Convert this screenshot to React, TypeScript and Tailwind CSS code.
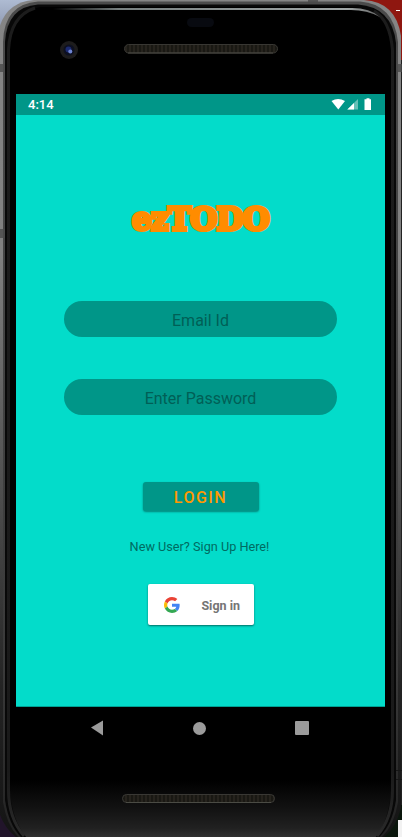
import React from "react";

function DeviceFrame() {
  return (
    <svg className="absolute inset-0" width="402" height="837" viewBox="0 0 402 837" aria-hidden="true">
      <defs>
        <linearGradient id="metal" x1="0" y1="0" x2="0" y2="837" gradientUnits="userSpaceOnUse">
          <stop offset="0" stopColor="#858585" />
          <stop offset="0.3" stopColor="#808080" />
          <stop offset="0.6" stopColor="#4c4c4c" />
          <stop offset="0.82" stopColor="#242424" />
          <stop offset="1" stopColor="#141414" />
        </linearGradient>
        <linearGradient id="rim" x1="0" y1="0" x2="0" y2="837" gradientUnits="userSpaceOnUse">
          <stop offset="0" stopColor="#4b4b4b" />
          <stop offset="0.8" stopColor="#3a3a3a" />
          <stop offset="1" stopColor="#222" />
        </linearGradient>
        <linearGradient id="body" x1="0" y1="780" x2="0" y2="837" gradientUnits="userSpaceOnUse">
          <stop offset="0" stopColor="#000" />
          <stop offset="0.5" stopColor="#121212" />
          <stop offset="0.85" stopColor="#212121" />
          <stop offset="1" stopColor="#303030" />
        </linearGradient>
        <linearGradient id="edge" x1="0" y1="0" x2="0" y2="837" gradientUnits="userSpaceOnUse">
          <stop offset="0" stopColor="#1c1c1c" />
          <stop offset="0.92" stopColor="#1a1a1a" />
          <stop offset="1" stopColor="#2a2a2a" />
        </linearGradient>
        <linearGradient id="wall" x1="0" y1="0" x2="0" y2="1">
          <stop offset="0" stopColor="#aebbd2" />
          <stop offset="1" stopColor="#777f98" />
        </linearGradient>
        <linearGradient id="shine" x1="53" y1="0" x2="380" y2="0" gradientUnits="userSpaceOnUse">
          <stop offset="0" stopColor="#000" />
          <stop offset="0.2" stopColor="#788080" />
          <stop offset="0.9" stopColor="#a0a6a6" />
          <stop offset="1" stopColor="#666" />
        </linearGradient>
        <pattern id="mesh" width="4" height="7" patternUnits="userSpaceOnUse">
          <rect width="4" height="7" fill="#191813" />
          <rect x="1" width="2" height="7" fill="#26231d" />
        </pattern>
      </defs>
      <rect width="402" height="837" fill="#222" />
      <rect width="40" height="50" fill="url(#wall)" />
      <rect x="350" width="52" height="60" fill="#8f1710" />
      <rect x="396" y="10" width="4" height="1" fill="#fff" />
      <rect y="790" width="30" height="47" fill="#21142a" />
      <rect x="370" y="805" width="32" height="32" fill="#0a160c" />
      <path d="M-1 812V29Q6 2 34 0H364Q396 2 401 36V808Q396 828 383 838H17Q4 828 -1 812Z" fill="url(#metal)" />
      <rect x="398" y="820" width="4" height="17" fill="#f2f2f2" />
      <path d="M3 802V42Q4 4 38 1.500H360Q394 4 398 42V802Q394 826 381 838H19Q7 826 3 802Z" fill="url(#rim)" />
      <path d="M5 800V42Q7 7 38 4.500H358Q392 7 396 43V800Q392 826 378 838H22Q9 826 5 800Z" fill="#080808" />
      <path d="M10 790V45Q12 12 40 7H356Q388 12 391 45V790Q389 821 375 838H27Q12 821 10 790Z" fill="url(#body)" />
      <path d="M24 836Q8.500 818 8.500 790V50Q10 16 35 8" fill="none" stroke="url(#edge)" strokeWidth="3" />
      <path d="M377 836Q392.500 818 392.500 790V50Q390 20 374 11" fill="none" stroke="url(#edge)" strokeWidth="3" />
      <path d="M53 8H352Q370 8 380 17Q367 10 351 10H53Z" fill="url(#shine)" />
      <path d="M0 64H5V72H0ZM396 64H402V72H396ZM0 229H5V238H0ZM308 0H318V4H308Z" fill="#4a4a4a" opacity=".8" />
      <path d="M396 770.500H402M396 779.500H402" stroke="#161616" />
      <rect x="187" y="18" width="27" height="9" rx="4.500" fill="#080a10" />
      <circle cx="69" cy="50" r="9" fill="#1d1c1c" />
      <circle cx="69" cy="50" r="5.500" fill="#0d1021" />
      <circle cx="68.500" cy="49.500" r="3" fill="#1c2a70" />
      <circle cx="70.300" cy="51.500" r="2" fill="#6e84d2" />
      <rect x="124.500" y="44.500" width="153" height="8.500" rx="4.200" fill="url(#mesh)" stroke="#383733" />
      <rect x="122.500" y="794.500" width="152" height="8" rx="4" fill="url(#mesh)" stroke="#393834" />
      <path d="M128 53H273M126 802.500H271" stroke="#4a4b44" />
    </svg>
  );
}

function StatusBar() {
  return (
    <header className="flex h-[21px] items-center justify-between bg-[#009688] pl-3 pr-[13px] text-white">
      <span className="text-[13px] leading-[21px] font-medium">4:14</span>
      <svg width="41" height="14" viewBox="331 98 41 14" fill="#fff">
        <path d="M331.500 101Q338 96.800 345 101L338.300 109.500Z" />
        <path d="M347.300 109.500L358 99V109.500Z" opacity=".4" />
        <path d="M347.300 109.500L354 103V109.500Z" />
        <path d="M364.500 99.300H366.500V98.300H369.500V99.300H371V110H364.500Z" />
      </svg>
    </header>
  );
}

function GoogleMark() {
  return (
    <svg width="16" height="16" viewBox="0 0 48 48">
      <path fill="#EA4335" d="M24 9.500c3.540 0 6.710 1.220 9.210 3.600l6.850-6.850C35.900 2.380 30.470 0 24 0 14.620 0 6.510 5.380 2.560 13.220l7.980 6.190C12.430 13.720 17.740 9.500 24 9.500z" />
      <path fill="#4285F4" d="M46.980 24.550c0-1.570-.15-3.090-.38-4.550H24v9.020h12.940c-.58 2.960-2.260 5.480-4.780 7.180l7.730 6c4.510-4.180 7.090-10.360 7.090-17.650z" />
      <path fill="#FBBC05" d="M10.530 28.590A14.500 14.500 0 0 1 9.770 24c0-1.600.27-3.140.76-4.590l-7.980-6.190A23.900 23.900 0 0 0 0 24c0 3.880.92 7.540 2.560 10.780z" />
      <path fill="#34A853" d="M24 48c6.480 0 11.930-2.130 15.890-5.810l-7.730-6c-2.150 1.450-4.920 2.300-8.160 2.300-6.260 0-11.570-4.220-13.470-9.910l-7.980 6.190C6.510 42.620 14.620 48 24 48z" />
    </svg>
  );
}

const field =
  "block h-9 w-[273px] rounded-full bg-[#009688] pt-[2px] text-center text-base text-[#005f56] outline-none placeholder:text-[#005f56] placeholder:opacity-100";

export default function App() {
  return (
    <div className="relative h-[837px] w-[402px] overflow-hidden bg-black font-['Roboto',sans-serif]">
      <DeviceFrame />
      <div className="relative ml-4 flex w-[369px] flex-col pt-[94px]">
        <StatusBar />
        <main className="flex h-[592px] flex-col items-center border-b border-[#00a193] bg-[#03dcca]">
          <h1 className="mt-[84px] h-10 whitespace-nowrap font-['DejaVu_Serif',serif] text-[31px] leading-10 font-bold tracking-[-0.7px] text-[#ff8c00] [-webkit-text-stroke:4px_#ff8c00]">
            ezTODO
          </h1>
          <form className="mt-[62px] flex flex-col items-center" onSubmit={(e) => e.preventDefault()}>
            <input className={field} placeholder="Email Id" type="email" />
            <input className={field + " mt-[42px]"} placeholder="Enter Password" type="password" />
            <button className="mt-[67px] h-[29px] w-[116px] rounded-[3px] bg-[#009688] pt-[2px] text-base leading-[27px] font-medium tracking-[1.5px] text-[#ff9800] shadow-[0_1px_2px_rgba(0,0,0,.4)]">
              LOGIN
            </button>
          </form>
          <a className="mt-[27px] mr-[2px] h-[18px] text-[12.700px] leading-[18px] text-[#006b61]" href="#signup">
            New User? Sign Up Here!
          </a>
          <button className="mt-[28px] ml-[1px] flex h-[41px] w-[106px] items-center justify-between rounded-[2px] bg-white pr-[14px] pl-4 text-[12.500px] font-bold text-[#757575] shadow-[0_1px_2px_rgba(0,0,0,.5)]">
            <GoogleMark />
            <span className="pt-[3px]">Sign in</span>
          </button>
        </main>
        <nav className="mt-[13px] flex h-4 items-center justify-between pr-[76px] pl-[74px]">
          <svg width="14" height="16" fill="#9b9b9b"><path d="M1 7.500L13 .5V15.500Z" /></svg>
          <span className="size-[13px] rounded-full bg-[#9b9b9b]" />
          <span className="size-[14px] rounded-[1px] bg-[#9b9b9b]" />
        </nav>
      </div>
    </div>
  );
}
